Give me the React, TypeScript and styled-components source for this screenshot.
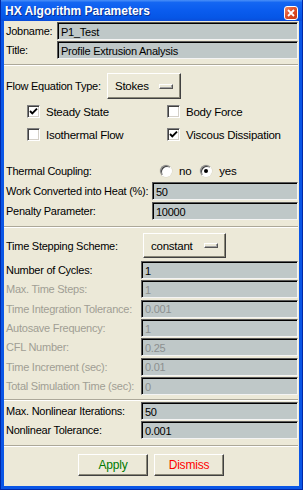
import React from "react";
import styled, { createGlobalStyle } from "styled-components";

const GlobalStyle = createGlobalStyle`
  html, body {
    margin: 0;
    padding: 0;
    background: #ffffff;
  }
  * { box-sizing: border-box; }
`;

type Field = { label: string; value: string; disabled?: boolean };

const timeFields: Field[] = [
  { label: "Number of Cycles:", value: "1" },
  { label: "Max. Time Steps:", value: "1", disabled: true },
  { label: "Time Integration Tolerance:", value: "0.001", disabled: true },
  { label: "Autosave Frequency:", value: "1", disabled: true },
  { label: "CFL Number:", value: "0.25", disabled: true },
  { label: "Time Increment (sec):", value: "0.01", disabled: true },
  { label: "Total Simulation Time (sec):", value: "0", disabled: true },
];

function CheckMark() {
  return (
    <svg width="9" height="9" viewBox="0 0 9 9">
      <path d="M1 4 L3.3 6.4 L8 1.6" fill="none" stroke="#000" strokeWidth="1.9" />
    </svg>
  );
}

function CheckItem({ label, checked }: { label: string; checked?: boolean }) {
  return (
    <CheckRow>
      <CheckBox>{checked && <CheckMark />}</CheckBox>
      <span>{label}</span>
    </CheckRow>
  );
}

function Radio({ label, checked }: { label: string; checked?: boolean }) {
  return (
    <RadioItem>
      <RadioCircle>{checked && <RadioDot />}</RadioCircle>
      <span>{label}</span>
    </RadioItem>
  );
}

export default function App() {
  return (
    <>
      <GlobalStyle />
      <Window>
        <TitleBar>
          <TitleText>HX Algorithm Parameters</TitleText>
          <CloseButton>
            <svg width="8" height="8" viewBox="0 0 8 8">
              <path d="M1 1 L7 7 M7 1 L1 7" stroke="#fff" strokeWidth="1.8" />
            </svg>
          </CloseButton>
        </TitleBar>
        <Content>
          <FieldGrid $labelWidth={53} $top={1} $gap={1}>
            <Label>Jobname:</Label>
            <Input>P1_Test</Input>
            <Label>Title:</Label>
            <Input>Profile Extrusion Analysis</Input>
          </FieldGrid>

          <Separator $top={5} />

          <OptionRow $labelWidth={103} $top={7}>
            <Label>Flow Equation Type:</Label>
            <OptionButton $width={74} $height={26}>
              <span>Stokes</span>
              <OptionIndicator />
            </OptionButton>
          </OptionRow>

          <CheckGrid>
            <CheckItem label="Steady State" checked />
            <CheckItem label="Body Force" />
            <CheckItem label="Isothermal Flow" />
            <CheckItem label="Viscous Dissipation" checked />
          </CheckGrid>

          <FieldGrid $labelWidth={148} $top={21} $gap={2}>
            <Label>Thermal Coupling:</Label>
            <RadioGroup>
              <Radio label="no" />
              <Radio label="yes" checked />
            </RadioGroup>
            <Label>Work Converted into Heat (%):</Label>
            <Input>50</Input>
            <Label>Penalty Parameter:</Label>
            <Input>10000</Input>
          </FieldGrid>

          <Separator $top={6} />

          <OptionRow $labelWidth={139} $top={5}>
            <Label>Time Stepping Scheme:</Label>
            <OptionButton $width={83} $height={25}>
              <span>constant</span>
              <OptionIndicator />
            </OptionButton>
          </OptionRow>

          <FieldGrid $labelWidth={137} $top={3} $gap={1.35}>
            {timeFields.map((f) => (
              <React.Fragment key={f.label}>
                <Label $disabled={f.disabled}>{f.label}</Label>
                <Input $disabled={f.disabled}>{f.value}</Input>
              </React.Fragment>
            ))}
          </FieldGrid>

          <Separator $top={4} />

          <FieldGrid $labelWidth={137} $top={1} $gap={1}>
            <Label>Max. Nonlinear Iterations:</Label>
            <Input>50</Input>
            <Label>Nonlinear Tolerance:</Label>
            <Input>0.001</Input>
          </FieldGrid>

          <Separator $top={6} />

          <ButtonRow>
            <PushButton $color="#007a00">Apply</PushButton>
            <PushButton $color="#ff0000">Dismiss</PushButton>
          </ButtonRow>
        </Content>
      </Window>
    </>
  );
}

const Window = styled.div`
  width: 303px;
  height: 490px;
  display: flex;
  flex-direction: column;
  background: #0a56e6;
  padding: 0 4px 4px 4px;
  box-shadow: inset 1px 0 #0028a8, inset -1px 0 #0028a8, inset 0 -1px #0028a8;
  font-family: "Liberation Sans", Arial, sans-serif;
  font-size: 11px;
  letter-spacing: -0.25px;
  color: #000;
`;

const TitleBar = styled.div`
  height: 21px;
  margin: 0 -4px;
  padding: 0 5px 0 5px;
  display: flex;
  align-items: center;
  justify-content: space-between;
  background: linear-gradient(
    #4a90f8 0%,
    #1466f2 12%,
    #0a5cee 50%,
    #0656e6 85%,
    #0a4cd8 100%
  );
  box-shadow: inset 1px 0 #0028a8, inset -1px 0 #0028a8;
`;

const TitleText = styled.span`
  color: #ffffff;
  font-weight: 700;
  font-size: 12px;
  letter-spacing: 0;
  padding-top: 1px;
  text-shadow: 1px 1px 0 #0a3090;
`;

const CloseButton = styled.div`
  width: 14px;
  height: 14px;
  margin-top: 4px;
  margin-right: 0px;
  border: 1px solid #ffffff;
  border-radius: 3px;
  background: linear-gradient(135deg, #f08a68 0%, #e0502a 45%, #c83a12 100%);
  display: flex;
  align-items: center;
  justify-content: center;
`;

const Content = styled.div`
  flex: 1;
  background: #ece9d8;
  padding: 0 1px 0 0;
  display: flex;
  flex-direction: column;
`;

const FieldGrid = styled.div<{ $labelWidth: number; $top: number; $gap: number }>`
  display: grid;
  grid-template-columns: ${(p) => p.$labelWidth}px 1fr;
  grid-auto-rows: 18px;
  row-gap: ${(p) => p.$gap}px;
  margin-top: ${(p) => p.$top}px;
`;

const Label = styled.div<{ $disabled?: boolean }>`
  display: flex;
  align-items: center;
  padding-left: 2px;
  white-space: nowrap;
  color: ${(p) => (p.$disabled ? "#a09e94" : "#000000")};
`;

const Input = styled.div<{ $disabled?: boolean }>`
  display: flex;
  align-items: center;
  padding: 1px 0 0 3px;
  background: #bfc8c8;
  border: 1px solid;
  border-color: #5a5a5a #f4f4f4 #f4f4f4 #5a5a5a;
  box-shadow: inset 1px 1px 0 #000000;
  white-space: nowrap;
  color: ${(p) => (p.$disabled ? "#8c9090" : "#000000")};
`;

const Separator = styled.div<{ $top: number }>`
  height: 2px;
  margin-top: ${(p) => p.$top}px;
  border-top: 1px solid #aca899;
  border-bottom: 1px solid #ffffff;
`;

const OptionRow = styled.div<{ $labelWidth: number; $top: number }>`
  display: grid;
  grid-template-columns: ${(p) => p.$labelWidth}px auto;
  justify-content: start;
  align-items: center;
  margin-top: ${(p) => p.$top}px;
`;

const OptionButton = styled.div<{ $width: number; $height: number }>`
  width: ${(p) => p.$width}px;
  height: ${(p) => p.$height}px;
  display: flex;
  align-items: center;
  justify-content: space-between;
  padding: 0 7px 0 7px;
  background: #ece9d8;
  border: 1px solid;
  border-color: #ffffff #404040 #404040 #ffffff;
  box-shadow: inset -1px -1px 0 #8a8878;
  font-size: 11.5px;
`;

const OptionIndicator = styled.div`
  width: 14px;
  height: 5px;
  background: #ece9d8;
  border: 1px solid;
  border-color: #ffffff #555555 #555555 #ffffff;
  box-shadow: inset -1px -1px 0 #a0a0a0;
`;

const CheckGrid = styled.div`
  display: grid;
  grid-template-columns: 140px 1fr;
  grid-auto-rows: 13px;
  row-gap: 10px;
  padding-left: 23px;
  margin-top: 6px;
`;

const CheckRow = styled.div`
  display: flex;
  align-items: center;
  gap: 6px;
  font-size: 11.5px;
  white-space: nowrap;
`;

const CheckBox = styled.div`
  width: 13px;
  height: 13px;
  flex: none;
  display: flex;
  align-items: center;
  justify-content: center;
  background: #ffffff;
  border: 1px solid;
  border-color: #808080 #ffffff #ffffff #808080;
  box-shadow: inset 1px 1px 0 #404040, inset -1px -1px 0 #d4d0c8;
`;

const RadioGroup = styled.div`
  display: flex;
  align-items: center;
  gap: 9px;
  padding-left: 8px;
`;

const RadioItem = styled.div`
  display: flex;
  align-items: center;
  gap: 7px;
  font-size: 11.5px;
`;

const RadioCircle = styled.div`
  width: 12px;
  height: 12px;
  border-radius: 50%;
  display: flex;
  align-items: center;
  justify-content: center;
  background: #ffffff;
  border: 1px solid;
  border-color: #808080 #ffffff #ffffff #808080;
  box-shadow: inset 1px 1px 0 #404040, 0 0 0 0.5px #d8d4c4;
`;

const RadioDot = styled.div`
  width: 4px;
  height: 4px;
  border-radius: 50%;
  background: #000000;
`;

const ButtonRow = styled.div`
  display: flex;
  justify-content: center;
  gap: 6px;
  margin-top: 7px;
`;

const PushButton = styled.div<{ $color: string }>`
  width: 70px;
  height: 22px;
  display: flex;
  align-items: center;
  justify-content: center;
  background: #ece9d8;
  border: 1px solid;
  border-color: #ffffff #404040 #404040 #ffffff;
  box-shadow: inset -1px -1px 0 #8a8878;
  color: ${(p) => p.$color};
  font-size: 12px;
  letter-spacing: -0.2px;
`;
